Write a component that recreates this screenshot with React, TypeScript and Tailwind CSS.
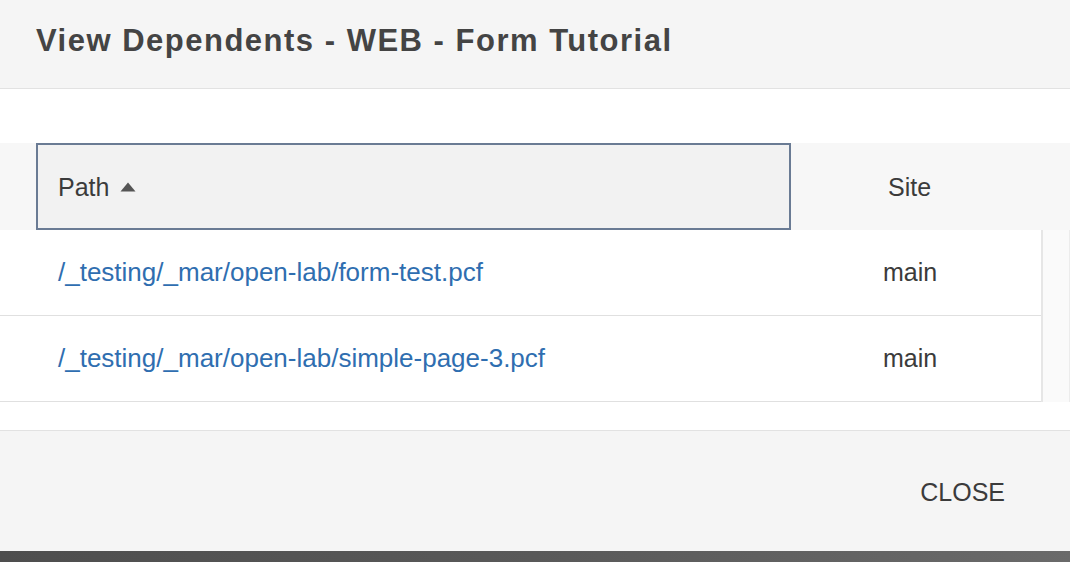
const rows = [
  { path: '/_testing/_mar/open-lab/form-test.pcf', site: 'main' },
  { path: '/_testing/_mar/open-lab/simple-page-3.pcf', site: 'main' },
];

export default function App() {
  return (
    <div
      className="w-[1070px] h-[562px] flex flex-col bg-white text-[#3b3b3b] overflow-hidden"
      style={{ fontFamily: '"Liberation Sans", Arial, sans-serif' }}
    >
      {/* Header */}
      <div className="h-[89px] shrink-0 bg-[#f5f5f5] border-b border-[#e2e2e2] flex items-center px-9 pb-[6px]">
        <h1 className="text-[31px] font-bold tracking-[1.5px] text-[#444]">
          View Dependents - WEB - Form Tutorial
        </h1>
      </div>

      {/* Body */}
      <div className="pt-[54px] h-[341px] shrink-0">
        <div className="flex h-[87px] bg-[#f7f7f7]">
          <div className="ml-9 w-[755px] border-2 border-[#6a7b94] bg-[#f2f2f2] flex items-center px-5 gap-[11px] pt-[2px]">
            <span className="text-[25px]">Path</span>
            <svg width="16" height="10" viewBox="0 0 16 10" className="mt-[-2px]">
              <path d="M8 0.5 L15.5 9.5 L0.5 9.5 Z" fill="#555" />
            </svg>
          </div>
          <div className="flex-1 flex items-center pl-[97px] text-[25px] pt-[2px]">Site</div>
        </div>
        <div className="flex">
          <div className="w-[1041px]">
            {rows.map((r) => (
              <div key={r.path} className="h-[86px] flex items-center border-b border-[#e0e0e0]">
                <a className="w-[883px] pl-[58px] text-[26px] text-[#2f6eb0]">{r.path}</a>
                <span className="text-[25px]">{r.site}</span>
              </div>
            ))}
          </div>
          <div className="w-[2px] bg-[#e6e6e6]" />
          <div className="flex-1 bg-[#fafafa] border-r border-[#ececec]" />
        </div>
      </div>

      {/* Footer */}
      <div className="h-[121px] shrink-0 bg-[#f5f5f5] border-t border-[#e2e2e2] flex items-center justify-end pr-[65px]">
        <button className="text-[25px] text-[#3b3b3b] pt-[4px]">CLOSE</button>
      </div>
      <div className="flex-1 bg-gradient-to-r from-[#4e4e4e] via-[#595959] to-[#6a6a6a]" />
    </div>
  );
}
